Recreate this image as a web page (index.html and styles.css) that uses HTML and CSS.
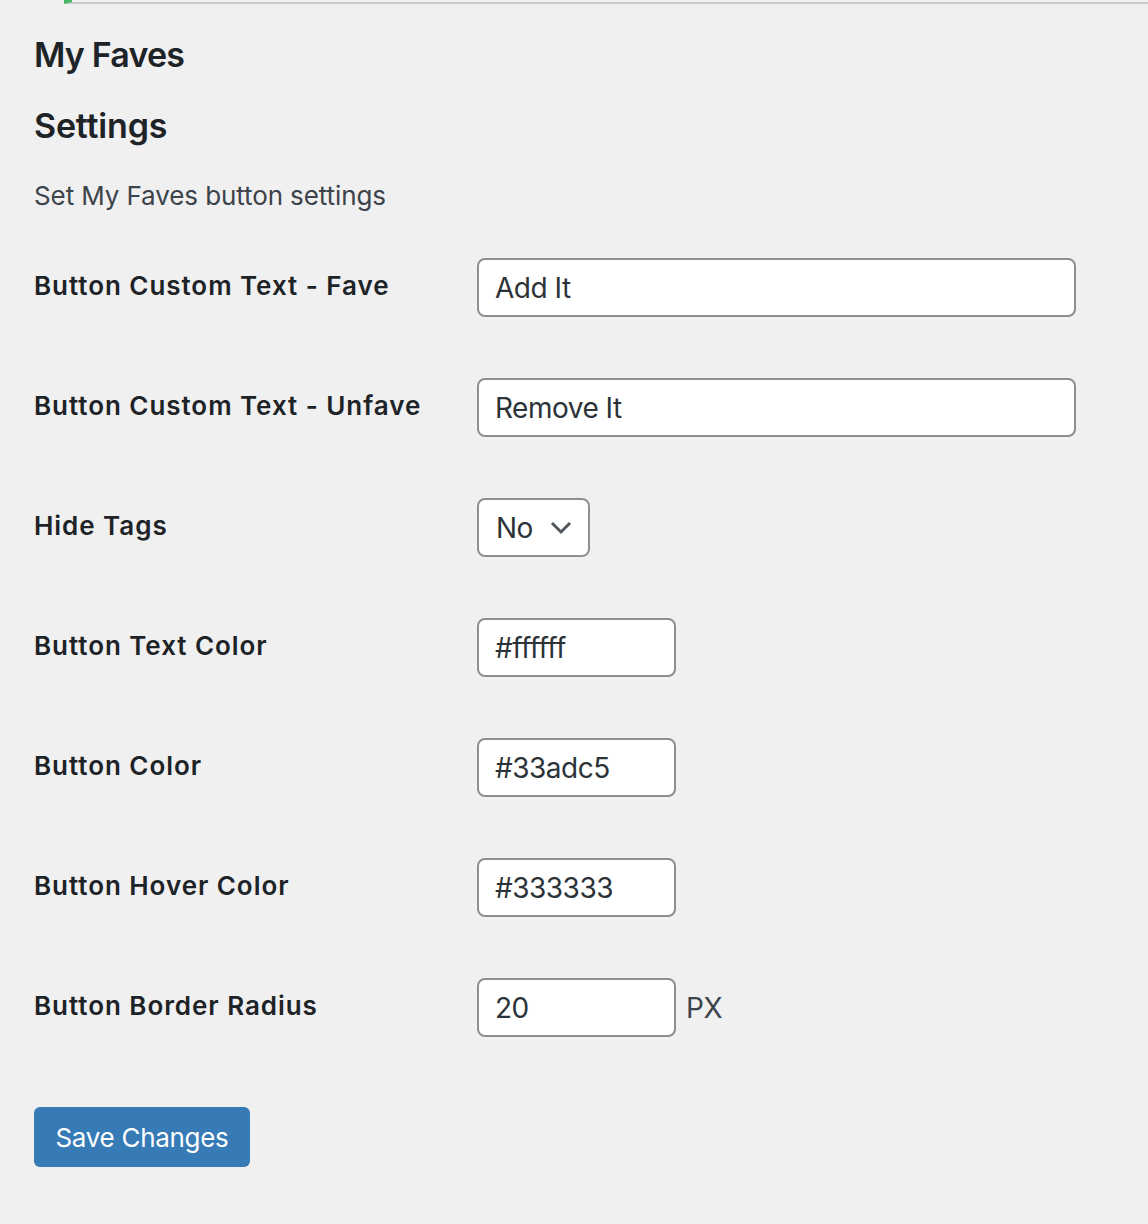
FILE: index.html
```html
<!DOCTYPE html>
<html lang="en">
<head>
<meta charset="utf-8">
<title>My Faves Settings</title>
<link rel="stylesheet" href="styles.css">
</head>
<body>
<div class="notice"></div>
<main class="wrap">
  <h1 class="title">My Faves</h1>
  <h2 class="subtitle">Settings</h2>
  <p class="desc">Set My Faves button settings</p>
  <form class="form">
    <div class="row">
      <label class="label">Button Custom Text - Fave</label>
      <div class="field"><input class="input input-wide" type="text" value="Add It"></div>
    </div>
    <div class="row">
      <label class="label">Button Custom Text - Unfave</label>
      <div class="field"><input class="input input-wide" type="text" value="Remove It"></div>
    </div>
    <div class="row">
      <label class="label">Hide Tags</label>
      <div class="field">
        <div class="select">
          <span class="select-value">No</span>
          <svg class="chevron" width="22" height="14" viewBox="0 0 22 14"><path d="M2 2 L11 11 L20 2" fill="none" stroke="#50575e" stroke-width="3"/></svg>
        </div>
      </div>
    </div>
    <div class="row">
      <label class="label">Button Text Color</label>
      <div class="field"><input class="input input-short" type="text" value="#ffffff"></div>
    </div>
    <div class="row">
      <label class="label">Button Color</label>
      <div class="field"><input class="input input-short" type="text" value="#33adc5"></div>
    </div>
    <div class="row">
      <label class="label">Button Hover Color</label>
      <div class="field"><input class="input input-short" type="text" value="#333333"></div>
    </div>
    <div class="row">
      <label class="label">Button Border Radius</label>
      <div class="field"><input class="input input-short" type="text" value="20"><span class="unit">PX</span></div>
    </div>
    <div class="submit">
      <button class="btn" type="button">Save Changes</button>
    </div>
  </form>
</main>
</body>
</html>
```
FILE: styles.css
```css
html, body {
  margin: 0;
  padding: 0;
  background: #f0f0f1;
}
body {
  font-family: Inter, "Noto Sans", sans-serif;
  color: #1d2327;
  overflow: hidden;
}
.notice {
  margin-left: 64px;
  height: 2px;
  background: #f0f0f1;
  border-left: 8px solid #4ab866;
  border-bottom: 2px solid #c8cacd;
}
.wrap {
  padding-left: 34px;
}
.title, .subtitle {
  font-size: 34px;
  font-weight: 600;
  line-height: 44px;
  margin: 0;
}
.title { margin-top: 29px; letter-spacing: -0.8px; }
.subtitle { margin-top: 27px; letter-spacing: -0.2px; }
.desc {
  font-size: 26px;
  line-height: 34px;
  color: #3c434a;
  margin: 31px 0 0;
  letter-spacing: -0.1px;
}
.form {
  margin-top: 15px;
}
.row {
  display: flex;
  align-items: flex-start;
  padding: 30px 0 31px;
}
.label {
  width: 443px;
  flex: none;
  font-size: 26px;
  font-weight: 600;
  line-height: 34px;
  margin-top: 11px;
  letter-spacing: 0.95px;
}
.field {
  display: flex;
  align-items: center;
}
.input, .select {
  box-sizing: border-box;
  height: 59px;
  border: 2px solid #8c8f94;
  border-radius: 8px;
  background: #fff;
  font-family: inherit;
  font-size: 28px;
  color: #2c3338;
  padding: 0 16px;
  outline: none;
  letter-spacing: -0.5px;
}
.input-wide { width: 599px; }
.input-short { width: 199px; }
.select {
  width: 113px;
  display: flex;
  align-items: center;
  justify-content: space-between;
  padding-left: 17px;
  padding-right: 16px;
}
.select-value { line-height: 1; }
.chevron { display: block; }
.unit {
  font-size: 28px;
  color: #3c434a;
  margin-left: 10px;
  letter-spacing: -0.3px;
}
.submit {
  padding-top: 39px;
}
.btn {
  box-sizing: border-box;
  width: 216px;
  height: 60px;
  border: none;
  border-radius: 6px;
  background: #367ab6;
  color: #fff;
  font-family: inherit;
  font-size: 26px;
  padding: 0;
  letter-spacing: -0.3px;
}
```
